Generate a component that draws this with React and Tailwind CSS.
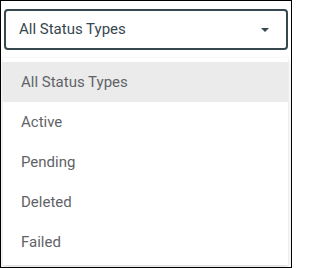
import React from "react";

const options = ["All Status Types", "Active", "Pending", "Deleted", "Failed"];

export default function App() {
  const selected = options[0];

  return (
    <div
      className="relative w-[292px] h-[268px] overflow-hidden border border-black bg-white"
      style={{ fontFamily: "Roboto, 'Noto Sans', sans-serif" }}
    >
      {/* Select */}
      <div className="pt-2 pl-[3px] pr-[3px]">
        <div className="flex h-[41px] items-center justify-between rounded-[4px] border-2 border-[#37474f] pl-[13px] pr-[17px]">
          <span className="text-[15px] text-[#37474f]">{selected}</span>
          <svg width="8" height="4" viewBox="0 0 8 4" className="fill-[#37474f]">
            <path d="M0 0h8L4 4z" />
          </svg>
        </div>
      </div>

      {/* Menu */}
      <div className="absolute left-[2px] right-[3px] top-[57px] bottom-[2px] bg-white pt-1 shadow-[0_2px_5px_rgba(0,0,0,0.16)]">
        {options.map((opt) => (
          <div
            key={opt}
            className={
              "flex h-10 items-center pl-[18px] text-[15px] text-[#5f6368] " +
              (opt === selected ? "bg-[#ebebeb]" : "")
            }
          >
            {opt}
          </div>
        ))}
      </div>
    </div>
  );
}
